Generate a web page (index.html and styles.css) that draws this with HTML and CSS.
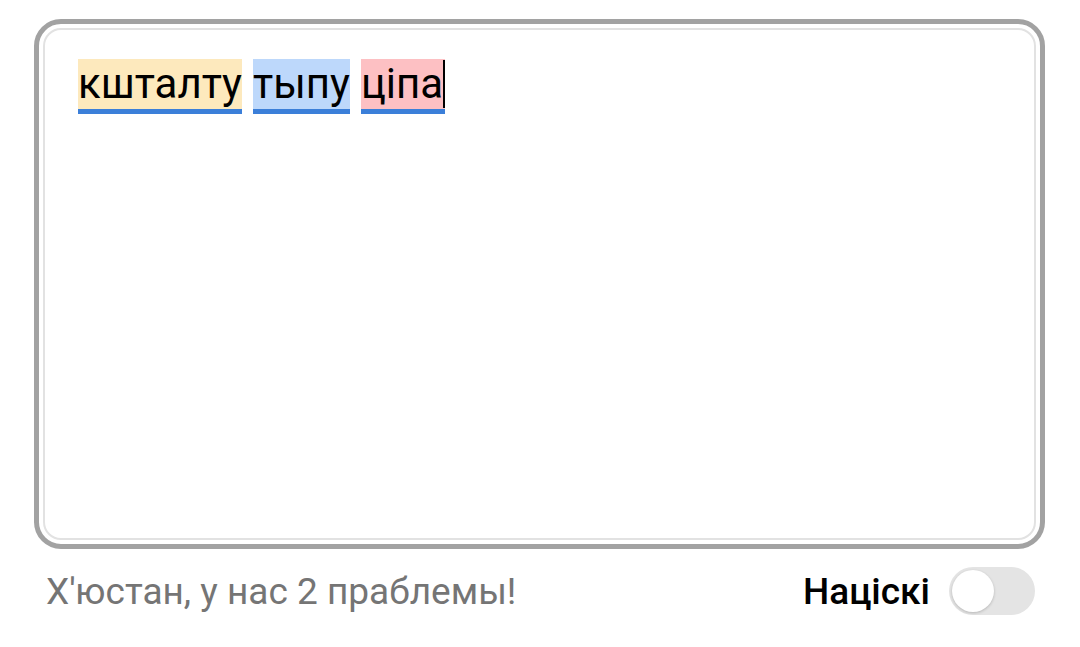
FILE: index.html
```html
<!DOCTYPE html>
<html lang="be">
<head>
<meta charset="utf-8">
<link rel="stylesheet" href="styles.css">
</head>
<body>
<div class="page">
  <div class="editor">
    <div class="inner">
      <div class="line">
        <span class="word w-yellow">кшталту</span>
        <span class="word w-blue">тыпу</span>
        <span class="word w-red">ціпа<span class="caret"></span></span>
      </div>
    </div>
  </div>
  <div class="footer">
    <div class="status">Х'юстан, у нас 2 праблемы!</div>
    <div class="control">
      <span class="label">Націскі</span>
      <span class="toggle"><span class="knob"></span></span>
    </div>
  </div>
</div>
</body>
</html>
```

FILE: styles.css
```css
html, body {
  margin: 0;
  padding: 0;
  background: #ffffff;
}
body {
  font-family: Roboto, "Noto Sans", sans-serif;
}
.page {
  width: 1011px;
  padding: 19px 0 0 34px;
}
.editor {
  box-sizing: border-box;
  height: 530px;
  border: 5px solid #a2a2a2;
  border-radius: 27px;
  padding: 4px;
}
.inner {
  box-sizing: border-box;
  height: 100%;
  border: 2px solid #e2e2e2;
  border-radius: 18px;
  padding: 29px 33px;
}
.line {
  display: flex;
  gap: 11px;
  align-items: flex-start;
}
.word {
  position: relative;
  display: inline-block;
  height: 50px;
  line-height: 50px;
  font-size: 42px;
  color: #000;
  border-bottom: 5px solid #3b7fd9;
}
.w-yellow { background: #fde9bd; }
.w-blue { background: #bdd8fb; }
.w-red { background: #fdc0c3; }
.caret {
  display: inline-block;
  width: 2px;
  height: 48px;
  background: #000;
  vertical-align: top;
  margin-top: 1px;
}
.footer {
  display: flex;
  align-items: center;
  justify-content: space-between;
  padding: 18px 10px 0 12px;
}
.status {
  font-size: 37px;
  color: #757575;
}
.control {
  display: flex;
  align-items: center;
  gap: 19px;
}
.label {
  font-size: 37px;
  font-weight: 500;
  color: #000;
}
.toggle {
  position: relative;
  display: inline-block;
  width: 86px;
  height: 48px;
  border-radius: 24px;
  background: #e4e4e4;
}
.knob {
  position: absolute;
  left: 3px;
  top: 3px;
  width: 42px;
  height: 42px;
  border-radius: 50%;
  background: #ffffff;
  box-shadow: 0 1px 3px rgba(0,0,0,0.2);
}
```
